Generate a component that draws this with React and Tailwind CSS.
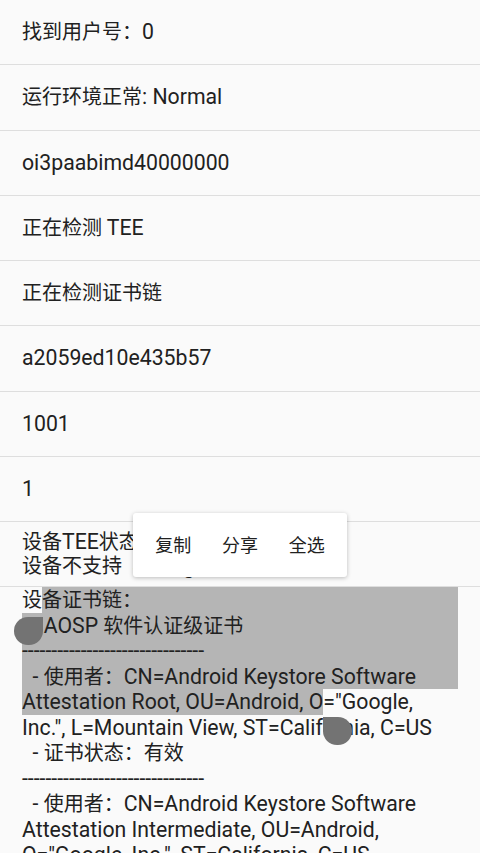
import React from "react";

const rows = [
  "找到用户号：0",
  "运行环境正常: Normal",
  "oi3paabimd40000000",
  "正在检测 TEE",
  "正在检测证书链",
  "a2059ed10e435b57",
  "1001",
  "1",
];

const dashes = "-------------------------------";

// latin runs render slightly larger than the CJK runs, like the device font
function T({ text }) {
  const parts = text.split(/([\u3000-\u9fff\uff00-\uffef]+)/);
  return parts.map((p, i) =>
    p ? (
      <span key={i} className={i % 2 ? "text-[20px]" : "text-[21.25px]"}>
        {p}
      </span>
    ) : null
  );
}

function Line({ text, selected, children }) {
  return (
    <div
      className={`flex h-[25.5px] items-center whitespace-pre ${
        selected ? "bg-[#b5b5b5]" : ""
      }`}
    >
      {children || <T text={text} />}
    </div>
  );
}

function Sel({ text, grow }) {
  return (
    <span
      className={`flex items-center self-stretch bg-[#b5b5b5] ${
        grow ? "flex-1" : ""
      }`}
    >
      <T text={text} />
    </span>
  );
}

export default function App() {
  return (
    <div className="relative h-[853px] overflow-hidden bg-[#fafafa] font-['Roboto','Noto_Sans_CJK_SC',sans-serif] text-[20px] text-[#212121]">
      {rows.map((row, i) => (
        <div
          key={i}
          className="flex h-[65.25px] items-center whitespace-pre border-b border-[#dedede] px-[22px]"
        >
          <T text={row} />
        </div>
      ))}
      <div className="flex h-[65.25px] flex-col justify-center whitespace-pre border-b border-[#dedede] px-[22px] leading-[23px]">
        <div>
          <T text="设备TEE状态：不可用" />
        </div>
        <div>
          <T text="设备不支持  StrongBox" />
        </div>
      </div>

      {/* cert chain text with selection */}
      <div className="relative px-[22px]">
        <Line>
          <span>设</span>
          <Sel grow text="备证书链：" />
        </Line>
        <Line selected text="  - AOSP 软件认证级证书" />
        <Line selected text={dashes} />
        <Line selected text="  - 使用者：CN=Android Keystore Software" />
        <Line>
          <Sel text="Attestation Root, OU=Android, O" />
          <T text={'="Google,'} />
        </Line>
        <Line text={'Inc.", L=Mountain View, ST=California, C=US'} />
        <Line text="  - 证书状态：有效" />
        <Line text={dashes} />
        <Line text="  - 使用者：CN=Android Keystore Software" />
        <Line text="Attestation Intermediate, OU=Android," />
        <Line text={'O="Google, Inc.", ST=California, C=US'} />

        {/* selection handles */}
        <div className="absolute left-[14px] top-[30px] h-[28px] w-[29px] rounded-tl-full rounded-bl-full rounded-br-full bg-[#737373]" />
        <div className="absolute left-[323px] top-[130px] h-[28px] w-[29px] rounded-tr-full rounded-bl-full rounded-br-full bg-[#737373]" />
      </div>

      {/* text selection toolbar */}
      <div className="absolute left-[133px] top-[513px] flex h-[64px] w-[214px] items-center rounded-[3px] bg-white px-[7px] text-[18px] shadow-[0_1px_4px_rgba(0,0,0,0.25)]">
        <button className="w-[67px] text-center">复制</button>
        <button className="w-[67px] text-center">分享</button>
        <button className="w-[67px] text-center">全选</button>
      </div>
    </div>
  );
}
